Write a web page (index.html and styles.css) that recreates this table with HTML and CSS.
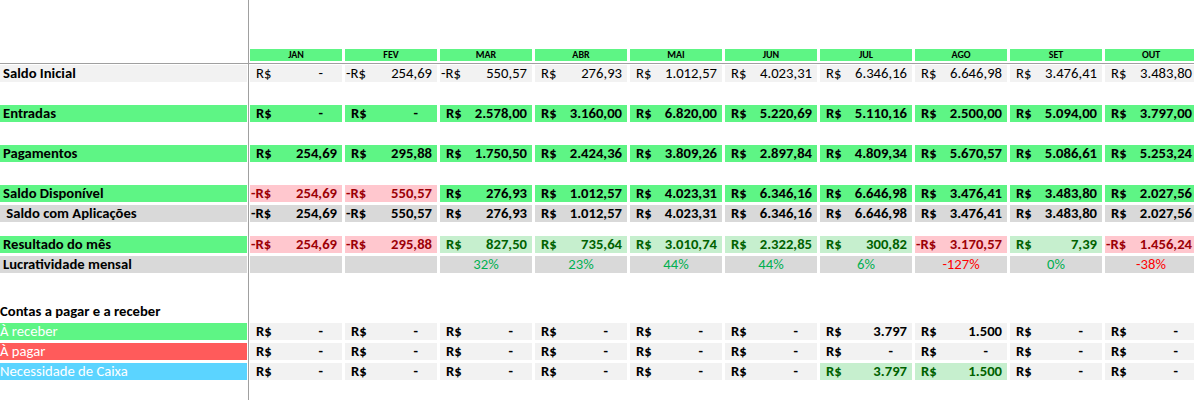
FILE: index.html
```html
<!DOCTYPE html>
<html lang="pt-BR">
<head>
<meta charset="utf-8">
<title>Fluxo de caixa</title>
<link rel="stylesheet" href="styles.css">
</head>
<body>
<div class="sheet">
  <div class="vline"></div>

  <div class="hrow">
    <div class="lab"></div>
    <div class="m">JAN</div><div class="m">FEV</div><div class="m">MAR</div><div class="m">ABR</div><div class="m">MAI</div>
    <div class="m">JUN</div><div class="m">JUL</div><div class="m">AGO</div><div class="m">SET</div><div class="m">OUT</div>
  </div>
  <div class="hline"></div>

  <div class="row grey1">
    <div class="lab">Saldo Inicial</div>
    <div class="c"><span>R$</span><span class="z">-</span></div>
    <div class="c neg"><span>-R$</span><span>254,69</span></div>
    <div class="c neg"><span>-R$</span><span>550,57</span></div>
    <div class="c"><span>R$</span><span>276,93</span></div>
    <div class="c"><span>R$</span><span>1.012,57</span></div>
    <div class="c"><span>R$</span><span>4.023,31</span></div>
    <div class="c"><span>R$</span><span>6.346,16</span></div>
    <div class="c"><span>R$</span><span>6.646,98</span></div>
    <div class="c"><span>R$</span><span>3.476,41</span></div>
    <div class="c"><span>R$</span><span>3.483,80</span></div>
  </div>
  <div class="blank"></div>

  <div class="row green bold">
    <div class="lab">Entradas</div>
    <div class="c"><span>R$</span><span class="z">-</span></div>
    <div class="c"><span>R$</span><span class="z">-</span></div>
    <div class="c"><span>R$</span><span>2.578,00</span></div>
    <div class="c"><span>R$</span><span>3.160,00</span></div>
    <div class="c"><span>R$</span><span>6.820,00</span></div>
    <div class="c"><span>R$</span><span>5.220,69</span></div>
    <div class="c"><span>R$</span><span>5.110,16</span></div>
    <div class="c"><span>R$</span><span>2.500,00</span></div>
    <div class="c"><span>R$</span><span>5.094,00</span></div>
    <div class="c"><span>R$</span><span>3.797,00</span></div>
  </div>
  <div class="blank"></div>

  <div class="row green bold">
    <div class="lab">Pagamentos</div>
    <div class="c"><span>R$</span><span>254,69</span></div>
    <div class="c"><span>R$</span><span>295,88</span></div>
    <div class="c"><span>R$</span><span>1.750,50</span></div>
    <div class="c"><span>R$</span><span>2.424,36</span></div>
    <div class="c"><span>R$</span><span>3.809,26</span></div>
    <div class="c"><span>R$</span><span>2.897,84</span></div>
    <div class="c"><span>R$</span><span>4.809,34</span></div>
    <div class="c"><span>R$</span><span>5.670,57</span></div>
    <div class="c"><span>R$</span><span>5.086,61</span></div>
    <div class="c"><span>R$</span><span>5.253,24</span></div>
  </div>
  <div class="blank"></div>

  <div class="row green bold">
    <div class="lab">Saldo Disponível</div>
    <div class="c neg bad"><span>-R$</span><span>254,69</span></div>
    <div class="c neg bad"><span>-R$</span><span>550,57</span></div>
    <div class="c"><span>R$</span><span>276,93</span></div>
    <div class="c"><span>R$</span><span>1.012,57</span></div>
    <div class="c"><span>R$</span><span>4.023,31</span></div>
    <div class="c"><span>R$</span><span>6.346,16</span></div>
    <div class="c"><span>R$</span><span>6.646,98</span></div>
    <div class="c"><span>R$</span><span>3.476,41</span></div>
    <div class="c"><span>R$</span><span>3.483,80</span></div>
    <div class="c"><span>R$</span><span>2.027,56</span></div>
  </div>

  <div class="row grey2 bold">
    <div class="lab">&nbsp;Saldo com Aplicações</div>
    <div class="c neg"><span>-R$</span><span>254,69</span></div>
    <div class="c neg"><span>-R$</span><span>550,57</span></div>
    <div class="c"><span>R$</span><span>276,93</span></div>
    <div class="c"><span>R$</span><span>1.012,57</span></div>
    <div class="c"><span>R$</span><span>4.023,31</span></div>
    <div class="c"><span>R$</span><span>6.346,16</span></div>
    <div class="c"><span>R$</span><span>6.646,98</span></div>
    <div class="c"><span>R$</span><span>3.476,41</span></div>
    <div class="c"><span>R$</span><span>3.483,80</span></div>
    <div class="c"><span>R$</span><span>2.027,56</span></div>
  </div>
  <div class="blank short"></div>

  <div class="row green bold">
    <div class="lab">Resultado do mês</div>
    <div class="c neg bad"><span>-R$</span><span>254,69</span></div>
    <div class="c neg bad"><span>-R$</span><span>295,88</span></div>
    <div class="c good"><span>R$</span><span>827,50</span></div>
    <div class="c good"><span>R$</span><span>735,64</span></div>
    <div class="c good"><span>R$</span><span>3.010,74</span></div>
    <div class="c good"><span>R$</span><span>2.322,85</span></div>
    <div class="c good"><span>R$</span><span>300,82</span></div>
    <div class="c neg bad"><span>-R$</span><span>3.170,57</span></div>
    <div class="c good"><span>R$</span><span>7,39</span></div>
    <div class="c neg bad"><span>-R$</span><span>1.456,24</span></div>
  </div>

  <div class="row grey2 pct">
    <div class="lab">Lucratividade mensal</div>
    <div class="c"></div>
    <div class="c"></div>
    <div class="c up">32%</div>
    <div class="c up">23%</div>
    <div class="c up">44%</div>
    <div class="c up">44%</div>
    <div class="c up">6%</div>
    <div class="c down">-127%</div>
    <div class="c up">0%</div>
    <div class="c down">-38%</div>
  </div>
  <div class="blank tall"></div>

  <div class="row bold plain">
    <div class="lab flush">Contas a pagar e a receber</div>
  </div>

  <div class="row grey1 bold">
    <div class="lab flush white lgreen">À receber</div>
    <div class="c"><span>R$</span><span class="z">-</span></div>
    <div class="c"><span>R$</span><span class="z">-</span></div>
    <div class="c"><span>R$</span><span class="z">-</span></div>
    <div class="c"><span>R$</span><span class="z">-</span></div>
    <div class="c"><span>R$</span><span class="z">-</span></div>
    <div class="c"><span>R$</span><span class="z">-</span></div>
    <div class="c"><span>R$</span><span>3.797</span></div>
    <div class="c"><span>R$</span><span>1.500</span></div>
    <div class="c"><span>R$</span><span class="z">-</span></div>
    <div class="c"><span>R$</span><span class="z">-</span></div>
  </div>

  <div class="row grey1 bold">
    <div class="lab flush white lred">À pagar</div>
    <div class="c"><span>R$</span><span class="z">-</span></div>
    <div class="c"><span>R$</span><span class="z">-</span></div>
    <div class="c"><span>R$</span><span class="z">-</span></div>
    <div class="c"><span>R$</span><span class="z">-</span></div>
    <div class="c"><span>R$</span><span class="z">-</span></div>
    <div class="c"><span>R$</span><span class="z">-</span></div>
    <div class="c"><span>R$</span><span class="z">-</span></div>
    <div class="c"><span>R$</span><span class="z">-</span></div>
    <div class="c"><span>R$</span><span class="z">-</span></div>
    <div class="c"><span>R$</span><span class="z">-</span></div>
  </div>

  <div class="row grey1 bold">
    <div class="lab flush white lblue">Necessidade de Caixa</div>
    <div class="c"><span>R$</span><span class="z">-</span></div>
    <div class="c"><span>R$</span><span class="z">-</span></div>
    <div class="c"><span>R$</span><span class="z">-</span></div>
    <div class="c"><span>R$</span><span class="z">-</span></div>
    <div class="c"><span>R$</span><span class="z">-</span></div>
    <div class="c"><span>R$</span><span class="z">-</span></div>
    <div class="c good"><span>R$</span><span>3.797</span></div>
    <div class="c good"><span>R$</span><span>1.500</span></div>
    <div class="c"><span>R$</span><span class="z">-</span></div>
    <div class="c"><span>R$</span><span class="z">-</span></div>
  </div>
</div>
</body>
</html>
```

FILE: styles.css
```css
html, body {
  margin: 0;
  padding: 0;
  background: #ffffff;
}

body {
  font-family: Carlito, Calibri, Lato, "Liberation Sans", sans-serif;
  font-size: 14.67px;
  color: #000000;
  overflow: hidden;
}

.sheet {
  position: relative;
  width: 1194px;
  height: 400px;
  padding-top: 49px;
  box-sizing: border-box;
  overflow: hidden;
}

.vline {
  position: absolute;
  left: 248px;
  top: 0;
  width: 1px;
  height: 400px;
  background: #a0a0a0;
  z-index: 2;
}

.hrow {
  display: flex;
  gap: 3px;
  height: 12px;
}

.hrow .lab {
  flex: 0 0 247px;
}

.m {
  flex: 0 0 92px;
  background: #5ef585;
  font-size: 10px;
  font-weight: bold;
  line-height: 12px;
  text-align: center;
}

.hline {
  height: 1px;
  background: #a0a0a0;
  margin: 2px 0 1px;
}

.row {
  display: flex;
  gap: 3px;
  height: 17px;
  margin-bottom: 3px;
  line-height: 17px;
  white-space: nowrap;
}

.blank {
  height: 20px;
}

.blank.short {
  height: 11px;
}

.blank.tall {
  height: 27px;
}

.lab {
  flex: 0 0 247px;
  padding-left: 3px;
  box-sizing: border-box;
  font-weight: bold;
}

.lab.flush {
  padding-left: 0;
}

.c {
  flex: 0 0 92px;
  display: flex;
  justify-content: space-between;
  padding: 0 5px 0 6px;
  box-sizing: border-box;
}

.c.neg {
  padding-left: 1px;
}

.z {
  margin-right: 14px;
}

.bold .c {
  font-weight: bold;
}

.grey1 .lab,
.grey1 .c {
  background: #f2f2f2;
}

.grey2 .lab,
.grey2 .c {
  background: #d9d9d9;
}

.green .lab,
.green .c {
  background: #5ef585;
}

.row .c.bad {
  background: #ffc7ce;
  color: #9c0006;
}

.row .c.good {
  background: #c6efce;
  color: #006100;
}

.pct .c {
  justify-content: center;
  padding: 0;
}

.up {
  color: #00b050;
}

.down {
  color: #ff0000;
}

.row .lab.white {
  color: #ffffff;
  font-weight: normal;
}

.row .lab.lgreen {
  background: #5ef585;
}

.row .lab.lred {
  background: #ff5b5b;
}

.row .lab.lblue {
  background: #5bd4ff;
}

.plain .lab {
  background: transparent;
}
```
